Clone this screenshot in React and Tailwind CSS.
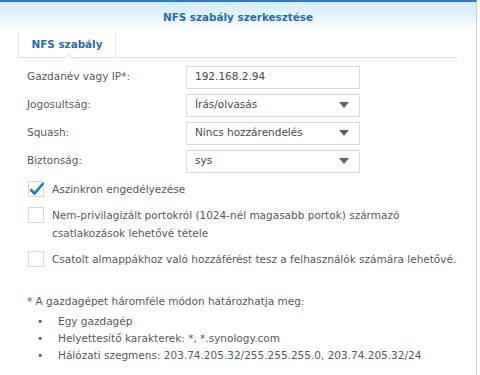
import React from 'react';

const font = { fontFamily: '"DejaVu Sans", Verdana, sans-serif' };

const Field = ({ label, value, select }) => (
  <div className="flex items-center h-[28px]">
    <div className="w-[159px] text-[#505a64]">{label}</div>
    <div className="w-[174px] h-[23px] border border-[#d6dbe0] bg-white flex items-center justify-between pl-[8px] pr-[10px] text-[#434c55]">
      <span>{value}</span>
      {select && (
        <svg width="10" height="6" viewBox="0 0 10 6">
          <path d="M0 0h10L5 6z" fill="#5a636c" />
        </svg>
      )}
    </div>
  </div>
);

const Check = ({ checked, children }) => (
  <div className="flex items-start">
    <div className="relative w-[16px] h-[16px] border border-[#d2d7dc] bg-white shrink-0 mt-[1px]">
      {checked && (
        <svg className="absolute -left-[1px] -top-[2px]" width="18" height="18" viewBox="0 0 18 18">
          <path d="M2.5 9.5l4 4L15.5 3" fill="none" stroke="#1b78d0" strokeWidth="2.6" />
        </svg>
      )}
    </div>
    <div className="ml-[8px] leading-[18px] text-[#505a64]">{children}</div>
  </div>
);

export default function App() {
  return (
    <div className="w-[480px] h-[375px] bg-white overflow-hidden text-[10.5px]" style={font}>
      <div className="w-[477px] h-full border-r border-[#c6ccd2] border-t-2 border-t-[#2f7bc4] bg-white">
        <div className="h-[30px] bg-gradient-to-b from-[#d3ebfd] to-white flex items-center justify-center pt-[2px]">
          <span className="font-bold text-[10.4px] text-[#1f6bb5]">NFS szabály szerkesztése</span>
        </div>
        <div className="mx-[18px] h-[26px] border-b border-[#dde2e6] flex relative">
          <div className="w-[98px] border-l border-r border-[#e4e8eb] flex items-center justify-center font-bold text-[10.4px] text-[#1f6bb5]">
            NFS szabály
          </div>
          <div className="absolute left-[45px] bottom-[-1px] w-[10px] h-[5px] overflow-hidden">
            <div className="w-[7px] h-[7px] bg-white border-l border-t border-[#dde2e6] rotate-45 mt-[2px] ml-[1.5px]" />
          </div>
        </div>
        <div className="pl-[27px] pt-[5px]">
          <Field label="Gazdanév vagy IP*:" value="192.168.2.94" />
          <Field label="Jogosultság:" value="Írás/olvasás" select />
          <Field label="Squash:" value="Nincs hozzárendelés" select />
          <Field label="Biztonság:" value="sys" select />
        </div>
        <div className="pl-[28px] pt-[5px] flex flex-col gap-[8px]">
          <Check checked>Aszinkron engedélyezése</Check>
          <Check>
            Nem-privilagizált portokról (1024-nél magasabb portok) származó
            <br />
            csatlakozások lehetővé tétele
          </Check>
          <Check>Csatolt almappákhoz való hozzáférést tesz a felhasználók számára lehetővé.</Check>
        </div>
        <div className="pl-[27px] pt-[25px] text-[#505a64] leading-[17px]">
          <div>* A gazdagépet háromféle módon határozhatja meg:</div>
          <ul className="mt-[3px]">
            {['Egy gazdagép', 'Helyettesítő karakterek: *, *.synology.com', 'Hálózati szegmens: 203.74.205.32/255.255.255.0, 203.74.205.32/24'].map((t) => (
              <li key={t} className="flex">
                <span className="w-[31px] pl-[10px]">•</span>
                <span>{t}</span>
              </li>
            ))}
          </ul>
        </div>
      </div>
    </div>
  );
}
